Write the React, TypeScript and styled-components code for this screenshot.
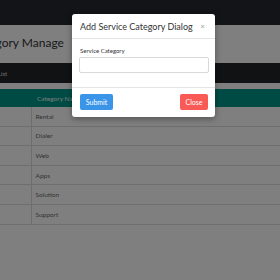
import * as React from 'react'
import styled, { createGlobalStyle } from 'styled-components'

const GlobalStyle = createGlobalStyle`
  html, body {
    margin: 0;
    padding: 0;
    background: #fff;
    font-family: Lato, "Open Sans", "Liberation Sans", sans-serif;
    overflow: hidden;
  }
`

const categories = ['Rental', 'Dialer', 'Web', 'Apps', 'Solution', 'Support']

const Page = styled.div`
  width: 280px;
  height: 280px;
  position: relative;
  overflow: hidden;
`

const Navbar = styled.div`
  height: 25px;
  background: #24292f;
`

/* the page is scrolled a little to the right, so its left edge is cut */
const Content = styled.div`
  margin-left: -40px;
  width: 320px;
`

const Title = styled.h2`
  margin: 0;
  height: 38px;
  display: flex;
  align-items: center;
  padding: 0 0 3px 11px;
  box-sizing: border-box;
  font-size: 12px;
  font-weight: 400;
  color: #333;
  white-space: nowrap;
`

const ListBar = styled.div`
  height: 20px;
  background: #212529;
  display: flex;
  align-items: center;
  padding-left: 38px;
  font-size: 6px;
  color: #ddd;
`

const Table = styled.div`
  margin-top: 6px;
`

const HeadRow = styled.div`
  height: 18px;
  background: #00998a;
  display: grid;
  grid-template-columns: 71.5px 1fr;
  align-items: center;
  font-size: 6.5px;
  color: #e8f4f2;
`

const Row = styled.div`
  height: 18.6px;
  border-bottom: 1px solid #dcdcdc;
  display: grid;
  grid-template-columns: 71.5px 1fr;
  font-size: 6.5px;
  color: #6a6a6a;
`

const Cell = styled.div<{ $first?: boolean }>`
  display: flex;
  align-items: center;
  padding-left: ${p => (p.$first ? 0 : 4)}px;
  border-right: ${p => (p.$first ? '1px solid #dcdcdc' : 'none')};
`

const HeadCell = styled.div`
  padding-left: 5.5px;
`

const Overlay = styled.div`
  position: absolute;
  inset: 0;
  background: rgba(0, 0, 0, 0.5);
  padding: 14px 0 0 72px;
`

const Dialog = styled.div`
  width: 143px;
  background: #fff;
  border-radius: 3px;
  box-shadow: 0 2px 6px rgba(0, 0, 0, 0.35);
`

const DialogHeader = styled.div`
  height: 24px;
  border-bottom: 1px solid #e5e5e5;
  display: flex;
  align-items: center;
  justify-content: space-between;
  padding: 0 8px;
`

const DialogTitle = styled.div`
  font-size: 9px;
  color: #333;
  white-space: nowrap;
`

const CloseX = styled.span`
  font-size: 8px;
  color: #b5b5b5;
  font-weight: 700;
  margin-right: 2px;
`

const DialogBody = styled.div`
  height: 48px;
  padding: 8px 6px 0 7px;
  box-sizing: border-box;
`

const Label = styled.div`
  font-size: 6px;
  color: #333;
  margin-left: 1px;
  height: 10px;
  line-height: 8px;
`

const Input = styled.div`
  height: 16px;
  width: 130px;
  box-sizing: border-box;
  border: 1px solid #d9d9d9;
  border-radius: 2px;
`

const DialogFooter = styled.div`
  border-top: 1px solid #e5e5e5;
  display: flex;
  justify-content: space-between;
  padding: 6px 7px 7px 8px;
`

const Button = styled.div<{ $color: string; $width: number }>`
  width: ${p => p.$width}px;
  height: 16px;
  background: ${p => p.$color};
  border-radius: 2px;
  color: #fff;
  font-size: 7px;
  display: flex;
  align-items: center;
  justify-content: center;
`

const App = () => (
  <Page>
    <GlobalStyle />
    <Navbar />
    <Content>
      <Title>Category Manage</Title>
      <ListBar>List</ListBar>
      <Table>
        <HeadRow>
          <div />
          <HeadCell>Category Name</HeadCell>
        </HeadRow>
        {categories.map(name => (
          <Row key={name}>
            <Cell $first />
            <Cell>{name}</Cell>
          </Row>
        ))}
      </Table>
    </Content>
    <Overlay>
      <Dialog>
        <DialogHeader>
          <DialogTitle>Add Service Category Dialog</DialogTitle>
          <CloseX>×</CloseX>
        </DialogHeader>
        <DialogBody>
          <Label>Service Category</Label>
          <Input />
        </DialogBody>
        <DialogFooter>
          <Button $color="#3a94e8" $width={33}>Submit</Button>
          <Button $color="#fa5a55" $width={28}>Close</Button>
        </DialogFooter>
      </Dialog>
    </Overlay>
  </Page>
)

export default App
